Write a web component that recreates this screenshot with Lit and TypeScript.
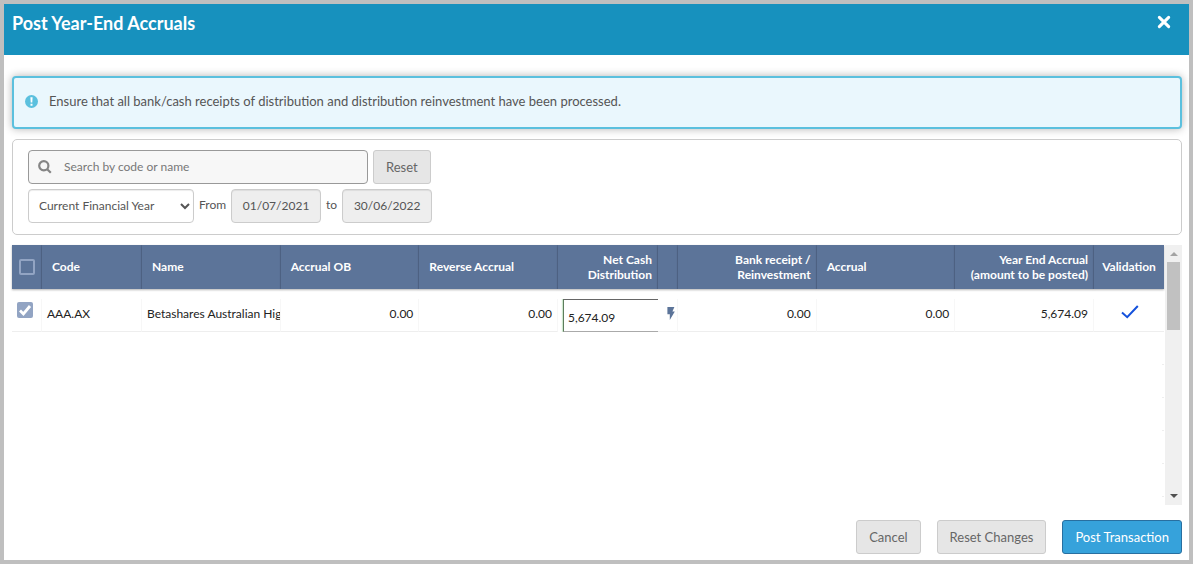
import { LitElement, html, css, svg } from "lit";
import { customElement, state } from "lit/decorators.js";

interface Holding {
  code: string;
  name: string;
  accrualOb: string;
  reverseAccrual: string;
  netCash: string;
  bankReceipt: string;
  accrual: string;
  yearEnd: string;
}

const HOLDINGS: Holding[] = [
  {
    code: "AAA.AX",
    name: "Betashares Australian High",
    accrualOb: "0.00",
    reverseAccrual: "0.00",
    netCash: "5,674.09",
    bankReceipt: "0.00",
    accrual: "0.00",
    yearEnd: "5,674.09",
  },
];

const EMPTY_ROWS = [1, 2, 3, 4, 5];

const closeIcon = svg`<svg class="close-icon" viewBox="0 0 12 12" aria-hidden="true"><path d="M2 2L10 10M10 2L2 10"/></svg>`;
const infoIcon = svg`<svg class="info-icon" viewBox="0 0 13 13" aria-hidden="true"><circle cx="6.5" cy="6.5" r="6.5"/><path d="M5.4 2.2h2.2l-.3 5.3H5.7zM5.5 8.7h2v2h-2z"/></svg>`;
const searchIcon = svg`<svg class="search-icon" viewBox="0 0 14 14" aria-hidden="true"><circle cx="5.8" cy="5.8" r="4.6"/><path d="M9.2 9.2L12.8 12.8"/></svg>`;
const boltIcon = svg`<svg class="bolt-icon" viewBox="0 0 8 13" aria-hidden="true"><path d="M.4 0H7.4L5.4 4.6H7.8L2.8 13V7.3H.4z"/></svg>`;
const tickIcon = svg`<svg class="tick-icon" viewBox="0 0 18 14" role="img" aria-label="Valid"><path d="M1 7.6L6.2 12.2L16.8 1"/></svg>`;

@customElement("app-root")
export class AppRoot extends LitElement {
  @state() private rows = HOLDINGS;

  static styles = css`
    * {
      box-sizing: border-box;
    }
    :host {
      display: flex;
      flex-direction: column;
      box-sizing: border-box;
      min-height: 100vh;
      border: 4px solid #bfbfbf;
      background: #fff;
      color: #555;
      font: 13px/18px Lato, sans-serif;
    }
    button,
    input,
    select {
      font: inherit;
      color: inherit;
      margin: 0;
    }
    .title-bar {
      display: flex;
      justify-content: space-between;
      align-items: flex-start;
      padding: 7px 18px 20px 8px;
      background: #1791be;
      color: #fff;
    }
    .title {
      margin: 0;
      font-size: 18px;
      line-height: 24px;
      font-weight: 700;
    }
    .close {
      display: flex;
      margin-top: 4px;
      padding: 0;
      border: 0;
      background: none;
      cursor: pointer;
    }
    .close-icon {
      width: 14px;
      height: 14px;
      fill: none;
      stroke: #fff;
      stroke-width: 2.6;
      stroke-linecap: round;
    }
    .body {
      display: flex;
      flex: 1;
      flex-direction: column;
      padding: 21px 7px 6px 8px;
    }
    .notice {
      display: flex;
      align-items: center;
      gap: 11px;
      padding: 14px 11px 17px;
      min-height: 53px;
      border: 2px solid #5bc0de;
      border-radius: 4px;
      background: #eaf7fd;
      box-shadow: 0 0 8px rgba(0, 0, 0, 0.3);
    }
    .info-icon {
      width: 13px;
      height: 13px;
      fill: #5bc0de;
    }
    .info-icon path {
      fill: #fff;
    }
    .filters {
      display: flex;
      flex-direction: column;
      gap: 5px;
      margin-top: 10px;
      padding: 10px 15px 11px;
      border: 1px solid #ccc;
      border-radius: 5px;
    }
    .filter-row {
      display: flex;
      align-items: center;
      gap: 5px;
    }
    .filter-row input,
    .filter-row select {
      height: 34px;
      border: 1px solid #ccc;
      border-radius: 4px;
      font-size: 12px;
      box-shadow: inset 0 1px 1px rgba(0, 0, 0, 0.075);
    }
    .filter-label {
      padding-bottom: 2px;
      font-size: 12px;
    }
    .search {
      display: flex;
      align-items: center;
      width: 340px;
      height: 34px;
      padding-left: 9px;
      gap: 12px;
      border: 1px solid #999;
      border-radius: 4px;
      background: #f7f7f7;
    }
    .search .search-input {
      flex: 1;
      height: 30px;
      min-width: 0;
      padding: 0 0 2px;
      border: 0;
      outline: 0;
      background: none;
      box-shadow: none;
    }
    .search-input::placeholder {
      color: #777;
      opacity: 1;
    }
    .search-icon {
      width: 14px;
      height: 14px;
      fill: none;
      stroke: #858585;
      stroke-width: 2.2;
    }
    .period {
      width: 166px;
      padding: 0 0 2px 6px;
      background: #fff;
    }
    .date {
      width: 90px;
      padding: 0 0 1px;
      text-align: center;
      background: #eee;
    }
    .btn {
      height: 34px;
      padding: 0 12px 1px;
      border: 1px solid #ccc;
      border-radius: 3px;
      background: #e6e6e6;
      color: #666;
      cursor: pointer;
    }
    .primary {
      border-color: #286fa0;
      background: #36a2db;
      color: #fff;
    }
    .grid {
      display: flex;
      flex: 1;
      min-height: 260px;
      margin-top: 10px;
    }
    .table-wrap {
      flex: 1;
      min-width: 0;
    }
    .table {
      width: 100%;
      table-layout: fixed;
      border-collapse: separate;
      border-spacing: 0;
      font-size: 12px;
      line-height: 15px;
      color: #222;
    }
    .table thead th {
      height: 44px;
      padding: 0 5px 1px 10px;
      border-right: 1px solid #566c90;
      background: #5c7499;
      color: #fff;
      text-align: left;
      font-weight: 700;
      box-shadow: 0 1px 2px rgba(0, 0, 0, 0.3);
    }
    .table thead th:last-child {
      border-right: 0;
    }
    .table tbody::before {
      content: "";
      display: table-row;
      height: 10px;
    }
    .table tbody td {
      height: 33px;
      padding: 0 5px 3px;
      overflow: hidden;
      white-space: nowrap;
      border-right: 1px solid #f7f7f7;
      border-bottom: 1px solid #eee;
    }
    .table tbody td:last-child {
      border-right: 0;
    }
    .table .num {
      text-align: right;
    }
    .table thead .check-head,
    .table thead .last {
      padding-left: 0;
      padding-right: 0;
      text-align: center;
    }
    .table tbody .check-cell {
      padding: 0 0 10px 5px;
    }
    .table tbody .edit-cell {
      padding: 0 0 0 5px;
      border: 0;
    }
    .table tbody .bolt-cell {
      padding: 0 0 3px;
    }
    .table tbody .tick-cell {
      padding: 0 0 8px 2px;
      text-align: center;
    }
    .table tbody .empty {
      border: 0;
      background: linear-gradient(#eee, #eee) right bottom / 2px 1px no-repeat;
    }
    .check {
      appearance: none;
      display: block;
      width: 16px;
      height: 16px;
      border: 2px solid #92a4c3;
      border-radius: 2px;
    }
    .check-head .check {
      margin: 0 auto;
    }
    .check:checked {
      border: 0;
      background: #92a4c3
        url("data:image/svg+xml,%3Csvg xmlns='http://www.w3.org/2000/svg' viewBox='0 0 16 16'%3E%3Cpath d='M3 8.6L6.4 12L13 4' fill='none' stroke='white' stroke-width='2.8'/%3E%3C/svg%3E");
    }
    .amount {
      display: block;
      width: 100%;
      height: 33px;
      padding: 3px 4px 0;
      border: 1px solid #666;
      border-width: 1px 0 1px 1px;
      border-left-color: #5d7d5d;
      border-bottom-color: #aaa;
      border-radius: 0;
      outline: 0;
      background: #fff;
      box-shadow: -1px 0 1px #cfe8cf;
    }
    .bolt {
      display: block;
      width: 100%;
      padding: 0 0 0 9px;
      border: 0;
      background: none;
      cursor: pointer;
    }
    .bolt-icon {
      display: block;
      width: 8px;
      height: 13px;
      fill: #5c7499;
    }
    .tick-icon {
      display: inline-block;
      vertical-align: middle;
      width: 18px;
      height: 14px;
      fill: none;
      stroke: #1451dc;
      stroke-width: 2;
    }
    .col-check {
      width: 30px;
    }
    .col-mid {
      width: 100px;
    }
    .col-bolt {
      width: 20px;
    }
    .col-valid {
      width: 70px;
    }
    .scrollbar {
      display: flex;
      flex-direction: column;
      align-items: center;
      width: 17px;
      margin-left: 1px;
      padding: 7px 0;
      background: #f0f0f0;
    }
    .arrow {
      border: 4px solid transparent;
      border-top: 0;
      border-bottom-color: #a3a3a3;
    }
    .arrow-down {
      margin-top: auto;
      border-top: 4px solid #505050;
      border-bottom: 0;
    }
    .thumb {
      width: 13px;
      height: 68px;
      margin-top: 6px;
      background: #c1c1c1;
    }
    .footer {
      display: flex;
      justify-content: flex-end;
      gap: 16px;
      margin-top: 15px;
    }
  `;

  render() {
    return html`
      <header class="title-bar">
        <h1 class="title">Post Year-End Accruals</h1>
        <button class="close" aria-label="Close">${closeIcon}</button>
      </header>
      <main class="body">
        <div class="notice" role="note">
          ${infoIcon}
          <span>Ensure that all bank/cash receipts of distribution and distribution reinvestment have been processed.</span>
        </div>
        <section class="filters">
          <div class="filter-row">
            <label class="search">
              ${searchIcon}
              <input class="search-input" type="text" placeholder="Search by code or name" aria-label="Search by code or name" />
            </label>
            <button class="btn">Reset</button>
          </div>
          <div class="filter-row">
            <select class="period" aria-label="Period">
              <option>Current Financial Year</option>
            </select>
            <label class="filter-label" for="from">From</label>
            <input class="date" id="from" type="text" value="01/07/2021" disabled />
            <label class="filter-label" for="to">to</label>
            <input class="date" id="to" type="text" value="30/06/2022" disabled />
          </div>
        </section>
        <section class="grid">
          <div class="table-wrap">
            <table class="table">
              <colgroup>
                <col class="col-check" />
                <col class="col-mid" />
                <col />
                <col />
                <col />
                <col class="col-mid" />
                <col class="col-bolt" />
                <col />
                <col />
                <col />
                <col class="col-valid" />
              </colgroup>
              <thead>
                <tr>
                  <th class="check-head"><input class="check" type="checkbox" aria-label="Select all" /></th>
                  <th>Code</th>
                  <th>Name</th>
                  <th>Accrual OB</th>
                  <th>Reverse Accrual</th>
                  <th class="num">Net Cash Distribution</th>
                  <th></th>
                  <th class="num">Bank receipt /<br />Reinvestment</th>
                  <th>Accrual</th>
                  <th class="num">Year End Accrual<br />(amount to be posted)</th>
                  <th class="last">Validation</th>
                </tr>
              </thead>
              <tbody>
                ${this.rows.map(
                  (r) => html`<tr>
                    <td class="check-cell"><input class="check" type="checkbox" checked aria-label="Select ${r.code}" /></td>
                    <td>${r.code}</td>
                    <td>${r.name}</td>
                    <td class="num">${r.accrualOb}</td>
                    <td class="num">${r.reverseAccrual}</td>
                    <td class="edit-cell"><input class="amount" type="text" .value=${r.netCash} aria-label="Net cash distribution" /></td>
                    <td class="bolt-cell"><button class="bolt" aria-label="Auto fill">${boltIcon}</button></td>
                    <td class="num">${r.bankReceipt}</td>
                    <td class="num">${r.accrual}</td>
                    <td class="num">${r.yearEnd}</td>
                    <td class="tick-cell">${tickIcon}</td>
                  </tr>`
                )}
                ${EMPTY_ROWS.map(() => html`<tr><td class="empty" colspan="11"></td></tr>`)}
              </tbody>
            </table>
          </div>
          <div class="scrollbar" aria-hidden="true">
            <span class="arrow"></span>
            <span class="thumb"></span>
            <span class="arrow arrow-down"></span>
          </div>
        </section>
        <footer class="footer">
          <button class="btn">Cancel</button>
          <button class="btn">Reset Changes</button>
          <button class="btn primary">Post Transaction</button>
        </footer>
      </main>
    `;
  }
}
